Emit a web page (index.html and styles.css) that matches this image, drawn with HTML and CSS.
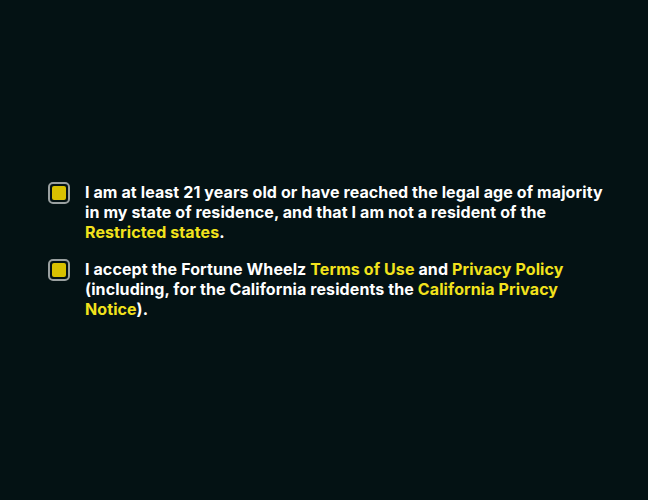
FILE: index.html
```html
<!DOCTYPE html>
<html lang="en">
<head>
    <meta charset="UTF-8">
    <meta name="viewport" content="width=device-width, initial-scale=1.0">
    <title>Consent</title>
    <link rel="stylesheet" href="styles.css">
</head>
<body>
    <div class="consent">
        <label class="consent-row">
            <span class="checkbox checked"><span class="checkbox-mark"></span></span>
            <span class="consent-text">I am at least 21 years old or have reached the legal age of majority in my state of residence, and that I am not a resident of the <a href="#" class="link">Restricted states</a>.</span>
        </label>
        <label class="consent-row">
            <span class="checkbox checked"><span class="checkbox-mark"></span></span>
            <span class="consent-text">I accept the Fortune Wheelz <a href="#" class="link">Terms of Use</a> and <a href="#" class="link">Privacy Policy</a> (including, for the California residents the <a href="#" class="link">California Privacy Notice</a>).</span>
        </label>
    </div>
</body>
</html>
```

FILE: styles.css
```css
body {
    margin: 0;
    height: 500px;
    background-color: #041214;
    font-family: 'Inter', 'Liberation Sans', sans-serif;
}
.consent {
    display: flex;
    flex-direction: column;
    gap: 17px;
    padding: 182px 0 0 48px;
    width: 559px;
}
.consent-row {
    display: flex;
    align-items: flex-start;
    gap: 15px;
    cursor: pointer;
}
.checkbox {
    flex: none;
    display: flex;
    justify-content: center;
    align-items: center;
    width: 18px;
    height: 18px;
    border: 2px solid #9aa0a0;
    border-radius: 5px;
}
.checkbox-mark {
    width: 14px;
    height: 14px;
    border-radius: 2px;
    background-color: #d8c100;
}
.consent-text {
    color: #ffffff;
    font-size: 16px;
    font-weight: 700;
    letter-spacing: 0.1px;
    line-height: 20px;
}
.link {
    color: #f2e21c;
    text-decoration: none;
}
```
